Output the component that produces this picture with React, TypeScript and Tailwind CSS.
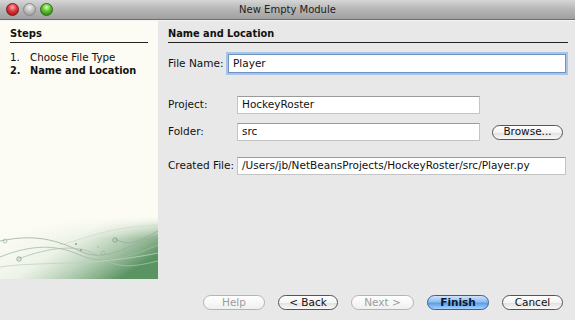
import React from 'react';

const font = { fontFamily: '"DejaVu Sans", "Liberation Sans", sans-serif' };

const Light = ({ color }: { color: 'red' | 'gray' | 'green' }) => {
    const cls =
        color === 'red'
            ? 'bg-[radial-gradient(circle_at_50%_30%,#ffb0b0_0%,#e0323a_45%,#8a0f14_100%)] border-[#7a1a1a]'
            : color === 'green'
            ? 'bg-[radial-gradient(circle_at_50%_30%,#d8ffb0_0%,#58c22a_45%,#2a6a0c_100%)] border-[#2f6a1a]'
            : 'bg-[radial-gradient(circle_at_50%_30%,#f2f2f2_0%,#bcbcbc_50%,#8a8a8a_100%)] border-[#8a8a8a]';
    return <div className={`w-[13px] h-[13px] rounded-full border ${cls}`} />;
};

const Field = ({ value, focus, w }: { value: string; focus?: boolean; w: string }) => (
    <div
        className={`${w} ${focus ? 'h-[19px]' : 'h-[18px]'} bg-white flex items-center px-[4px] text-[10.5px] text-[#111] whitespace-nowrap border ${
            focus
                ? 'border-[#6d93c6] shadow-[0_0_0_2px_#a9c4e6]'
                : 'border-[#c4c4c4] border-t-[#9a9a9a]'
        }`}
    >
        {value}
    </div>
);

const AquaButton = ({
    label,
    w,
    disabled,
    primary,
}: {
    label: string;
    w: string;
    disabled?: boolean;
    primary?: boolean;
}) => (
    <div
        className={`${w} h-[15px] rounded-full border flex items-center justify-center text-[10.5px] whitespace-nowrap ${
            primary
                ? 'bg-[linear-gradient(#cfe3fb_0%,#8fbdf0_45%,#5a9ee8_55%,#a8d2ff_100%)] border-[#3b5f91] text-[#0a1a30] font-bold'
                : disabled
                ? 'bg-[linear-gradient(#ffffff,#f0f0f0)] border-[#b4b4b4] text-[#9c9c9c]'
                : 'bg-[linear-gradient(#ffffff_0%,#f4f4f4_50%,#e2e2e2_55%,#f8f8f8_100%)] border-[#555] text-[#111]'
        }`}
    >
        {label}
    </div>
);

const Waves = () => (
    <svg width="158" height="62" viewBox="0 0 158 62" className="block">
        <defs>
            <linearGradient id="g1" x1="0" y1="0" x2="1" y2="0.6">
                <stop offset="0" stopColor="#fcfcf4" stopOpacity="0" />
                <stop offset="0.5" stopColor="#e2ecdf" stopOpacity="0.6" />
                <stop offset="1" stopColor="#5a9462" />
            </linearGradient>
            <linearGradient id="fade" x1="0" y1="0" x2="0" y2="1">
                <stop offset="0" stopColor="#fcfcf4" stopOpacity="1" />
                <stop offset="0.35" stopColor="#fcfcf4" stopOpacity="0" />
            </linearGradient>
        </defs>
        <rect width="158" height="62" fill="url(#g1)" />
        <rect width="158" height="62" fill="url(#fade)" />
        <g fill="none" strokeWidth="0.8">
            <path d="M0 24 C30 18 50 20 80 34 C105 46 125 30 158 18" stroke="#9bb09c" />
            <path d="M0 40 C25 30 50 26 75 36 C100 48 120 44 158 28" stroke="#a6b8a7" />
            <path d="M18 42 C50 30 80 26 100 40 C120 54 140 48 158 44" stroke="#b0c0b0" />
            <path d="M115 22 C130 30 140 24 158 14" stroke="#98ae9a" />
            <path d="M60 28 C90 20 110 10 158 8" stroke="#cfdacf" />
            <path d="M0 50 C40 44 90 50 158 36" stroke="#c2d0c2" />
        </g>
        <circle cx="115" cy="23" r="2.2" fill="none" stroke="#7f9a82" strokeWidth="0.8" />
        <circle cx="19" cy="42" r="2.2" fill="none" stroke="#7f9a82" strokeWidth="0.8" />
        <circle cx="5" cy="24" r="2" fill="none" stroke="#a8b8a8" strokeWidth="0.8" />
        <circle cx="103" cy="36" r="1.8" fill="none" stroke="#a0b4a2" strokeWidth="0.7" />
        <circle cx="76" cy="27" r="0.9" fill="#7f9a82" />
        <circle cx="81" cy="33" r="0.9" fill="#7f9a82" />
        <circle cx="98" cy="30" r="0.7" fill="#9ab09c" />
    </svg>
);

export default function App() {
    return (
        <div className="w-[575px] h-[320px] bg-[#e8e8e8] flex flex-col overflow-hidden" style={font}>
            {/* title bar */}
            <div className="h-[20px] shrink-0 bg-[linear-gradient(#d6d6d6_0%,#b8b8b8_45%,#a0a0a0_100%)] border-b border-b-[#6e6e6e] relative flex items-center pl-[6px] gap-[4px]">
                <Light color="red" />
                <Light color="gray" />
                <Light color="green" />
                <div className="absolute inset-0 flex items-center justify-center text-[10px] text-[#222] pointer-events-none">
                    New Empty Module
                </div>
            </div>
            <div className="h-px bg-[#f4f4f4] shrink-0" />

            <div className="flex h-[258px] shrink-0">
                {/* steps */}
                <div className="w-[158px] bg-[#fcfcf4] flex flex-col">
                    <div className="px-[10px] pt-[6px]">
                        <div className="text-[10px] font-bold text-[#111] pb-[1px] border-b border-b-[#222] leading-[14px]">
                            Steps
                        </div>
                        <div className="mt-[8px] text-[10.3px] text-[#111] leading-[13px] whitespace-nowrap">
                            <div className="flex">
                                <span className="w-[20px]">1.</span>
                                <span>Choose File Type</span>
                            </div>
                            <div className="flex font-bold text-[9.8px]">
                                <span className="w-[20px]">2.</span>
                                <span>Name and Location</span>
                            </div>
                        </div>
                    </div>
                    <div className="mt-auto">
                        <Waves />
                    </div>
                </div>

                {/* form */}
                <div className="flex-1 pl-[10px] pr-[7px] pt-[6px] text-[10.5px] text-[#111] whitespace-nowrap">
                    <div className="font-bold text-[9.8px] pb-[1px] border-b border-b-[#222] leading-[14px]">
                        Name and Location
                    </div>
                    <div className="flex items-center mt-[11px]">
                        <span className="w-[60px]">File Name:</span>
                        <Field value="Player" focus w="w-[338px]" />
                    </div>
                    <div className="flex items-center mt-[23px]">
                        <span className="w-[69px]">Project:</span>
                        <Field value="HockeyRoster" w="w-[243px]" />
                    </div>
                    <div className="flex items-center mt-[9px]">
                        <span className="w-[69px]">Folder:</span>
                        <Field value="src" w="w-[243px]" />
                        <div className="ml-[12px]">
                            <AquaButton label="Browse..." w="w-[71px]" />
                        </div>
                    </div>
                    <div className="flex items-center mt-[16px]">
                        <span className="w-[69px]">Created File:</span>
                        <Field value="/Users/jb/NetBeansProjects/HockeyRoster/src/Player.py" w="w-[329px]" />
                    </div>
                </div>
            </div>

            {/* buttons */}
            <div className="flex justify-end items-center gap-[13px] pr-[12px] pt-[16px]">
                <AquaButton label="Help" w="w-[62px]" disabled />
                <AquaButton label="< Back" w="w-[60px]" />
                <AquaButton label="Next >" w="w-[63px]" disabled />
                <AquaButton label="Finish" w="w-[62px]" primary />
                <AquaButton label="Cancel" w="w-[61px]" />
            </div>
        </div>
    );
}
